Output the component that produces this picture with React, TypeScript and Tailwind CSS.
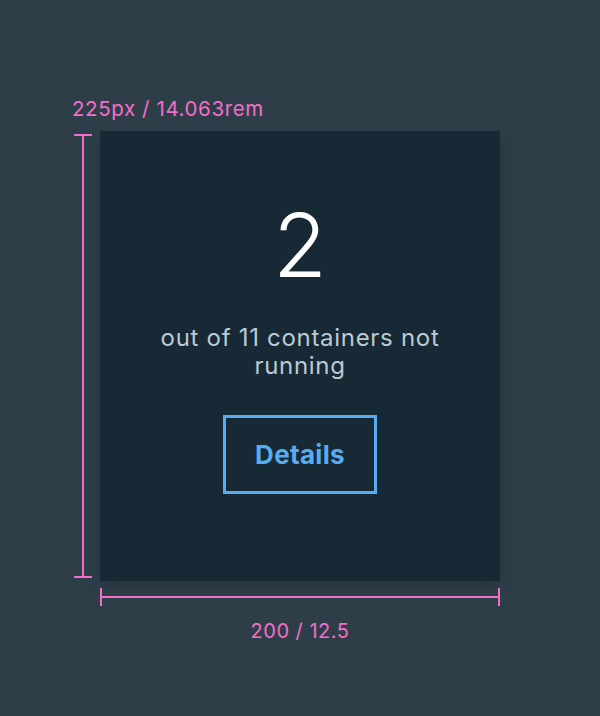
export default function App() {
  return (
    <div className="w-[600px] h-[716px] bg-[#2e3e48] pt-[97px] pl-[72px] font-['Inter',sans-serif]">
      {/* height spec */}
      <div className="text-[20.5px] leading-[24px] tracking-[0.6px] text-[#f26ec9]">225px / 14.063rem</div>

      <div className="flex mt-[10px]">
        <div className="w-[18px] ml-[2px] mt-[3px] h-[444px] flex flex-col items-center">
          <div className="w-full h-[2px] bg-[#f26ec9]" />
          <div className="flex-1 w-[2px] bg-[#f26ec9]" />
          <div className="w-full h-[2px] bg-[#f26ec9]" />
        </div>

        <div className="ml-[8px] w-[400px] h-[450px] bg-[#172935] shadow-[0_6px_12px_rgba(0,0,0,0.15)] flex flex-col items-center pt-[70px]">
          <div className="text-[88px] leading-[88px] font-light text-white">2</div>
          <p className="mt-[35px] w-[300px] text-center text-[24px] leading-[28px] tracking-[0.7px] text-[#bccad4]">
            out of 11 containers not running
          </p>
          <button className="mt-[35px] w-[154px] h-[79px] border-[3px] border-[#57acf1] text-[#57acf1] text-[26px] font-bold tracking-[0.3px]">
            Details
          </button>
        </div>
      </div>

      {/* width spec */}
      <div className="ml-[28px] mt-[7px] w-[400px] h-[18px] flex items-center">
        <div className="w-[2px] h-full bg-[#f26ec9]" />
        <div className="flex-1 h-[2px] bg-[#f26ec9]" />
        <div className="w-[2px] h-full bg-[#f26ec9]" />
      </div>
      <div className="ml-[28px] w-[400px] mt-[13px] text-center text-[20px] leading-[24px] tracking-[0.5px] text-[#f26ec9]">200 / 12.5</div>
    </div>
  )
}
